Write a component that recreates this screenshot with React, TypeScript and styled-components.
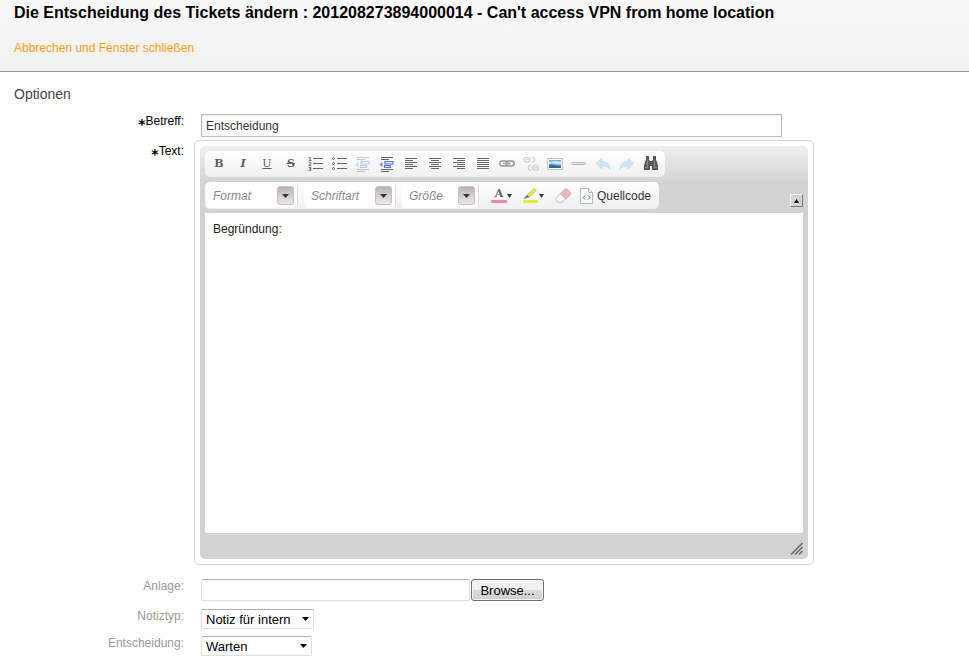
import React, { useRef, useState } from "react";
import styled, { createGlobalStyle } from "styled-components";

const GlobalStyle = createGlobalStyle`
  *, *::before, *::after { box-sizing: border-box; }
  body {
    margin: 0;
    background: #fff;
    color: #000;
    font-family: "Liberation Sans", Arial, sans-serif;
    font-size: 12px;
  }
  button, input, select, textarea { font: inherit; color: inherit; margin: 0; }
`;

const Header = styled.header`
  display: flex;
  flex-direction: column;
  align-items: flex-start;
  gap: 16px;
  padding: 3px 14px 14px;
  background: linear-gradient(#f9f9f9, #f1f1f1);
  border-bottom: 1px solid #999;
`;

const Title = styled.h1`
  margin: 0;
  font-size: 16px;
  line-height: 20px;
  font-weight: bold;
`;

const CancelLink = styled.a`
  color: #ff9b21;
  line-height: 18px;
  text-decoration: none;
  &:hover { text-decoration: underline; }
`;

const SectionTitle = styled.h2`
  margin: 0;
  padding: 14px 14px 12px;
  font-size: 14px;
  line-height: 16px;
  font-weight: normal;
  color: #444;
`;

const Form = styled.form`
  display: flex;
  flex-direction: column;
`;

const Row = styled.div<{ $gap?: number }>`
  display: grid;
  grid-template-columns: 184px minmax(0, 1fr);
  column-gap: 10px;
  align-items: start;
  margin-bottom: ${(p) => p.$gap ?? 0}px;
`;

const Label = styled.label<{ $required?: boolean; $lowered?: boolean }>`
  display: flex;
  justify-content: flex-end;
  align-items: center;
  height: 14px;
  margin-top: ${(p) => (p.$lowered ? 4 : 0)}px;
  line-height: 14px;
  color: ${(p) => (p.$required ? "#000" : "#999")};
`;

const Marker = styled.span`
  font-family: "DejaVu Sans", sans-serif;
  font-size: 14px;
  font-weight: bold;
  line-height: 14px;
  padding-top: 6px;
`;

const Field = styled.div`
  display: flex;
  gap: 1px;
  padding: 0 14px 0 7px;
`;

const SubjectInput = styled.input`
  flex: 0 1 581px;
  min-width: 0;
  height: 23px;
  padding: 0 4px;
  border: 1px solid #bbb;
  box-shadow: inset 1px 1px 2px #eee;
  background: #fff;
  color: #333;
`;

const Editor = styled.div`
  width: 100%;
  max-width: 620px;
  padding: 5px;
  border: 1px solid #d3d3d3;
  border-radius: 5px;
`;

const EditorBody = styled.div`
  display: flex;
  flex-direction: column;
  padding: 5px 5px 0;
  border-radius: 5px;
  background: #d3d3d3 linear-gradient(#efefef, #d3d3d3) no-repeat 0 0 / 100% 38px;
`;

const ToolbarArea = styled.div`
  display: flex;
  justify-content: space-between;
  align-items: flex-end;
  padding-bottom: 4px;
`;

const ToolbarRows = styled.div`
  display: flex;
  flex-direction: column;
  align-items: flex-start;
  gap: 5px;
`;

const Group = styled.div`
  display: flex;
  align-items: center;
  height: 26px;
  border-radius: 5px;
  background: linear-gradient(#fff, #f0f0f0);
`;

const IconGroup = styled(Group)`
  padding: 0 2px;
`;

const ComboGroup = styled(Group)`
  height: 27px;
  padding: 0 4px 0 1px;
`;

const ToolButton = styled.button<{ $width?: number; $faded?: boolean }>`
  display: flex;
  align-items: center;
  justify-content: center;
  width: ${(p) => p.$width ?? 24}px;
  height: 26px;
  padding: 0;
  border: 0;
  background: none;
  color: #606060;
  opacity: ${(p) => (p.$faded ? 0.35 : 1)};
  cursor: pointer;
`;

const Letter = styled.span<{ $kind: "b" | "i" | "u" | "s" }>`
  font-family: "DejaVu Serif", serif;
  font-size: 11px;
  line-height: 14px;
  font-weight: ${(p) => (p.$kind === "u" ? "normal" : "bold")};
  font-style: ${(p) => (p.$kind === "i" ? "italic" : "normal")};
  text-decoration: ${(p) =>
    p.$kind === "u" ? "underline" : p.$kind === "s" ? "line-through" : "none"};
`;

const ComboBox = styled.div<{ $width: number }>`
  display: grid;
  align-items: center;
  width: ${(p) => p.$width}px;
  height: 25px;
  margin-right: 6px;
  border-right: 1px solid #ddd;
  border-radius: 4px;
  background: #fff;
  > * { grid-area: 1 / 1; }
`;

const ComboSelect = styled.select`
  appearance: none;
  width: 100%;
  height: 24px;
  padding: 0 22px 0 7px;
  border: 0;
  background: none;
  color: #888;
  font-style: italic;
`;

const ComboArrow = styled.span`
  display: flex;
  justify-self: end;
  align-items: center;
  justify-content: center;
  width: 17px;
  height: 19px;
  margin-right: 3px;
  border: 1px solid #c6bfbf;
  border-radius: 3px;
  background: linear-gradient(#bdb3b3, #ece8e8);
  pointer-events: none;
`;

const SourceButton = styled.button`
  display: flex;
  align-items: center;
  gap: 4px;
  height: 26px;
  padding: 0 4px 0 3px;
  border: 0;
  background: none;
  color: #333;
  cursor: pointer;
`;

const CollapseButton = styled.button`
  display: flex;
  align-items: center;
  justify-content: center;
  width: 13px;
  height: 13px;
  margin-bottom: 2px;
  padding: 0;
  border: 1px solid;
  border-color: #f2f2f2 #777 #777 #f2f2f2;
  background: #d3d3d3;
`;

const TextArea = styled.textarea`
  display: block;
  width: 100%;
  height: 320px;
  padding: 8px;
  border: 0;
  outline: 0;
  resize: none;
  background: #fff;
  color: #222;
  line-height: 16px;
`;

const EditorFooter = styled.div`
  display: flex;
  justify-content: flex-end;
  align-items: flex-end;
  height: 26px;
  padding-bottom: 4px;
`;

const FilePath = styled.input`
  flex: 0 1 269px;
  min-width: 0;
  height: 22px;
  border: 1px solid #dbdfe6;
  border-top-color: #abadb3;
  border-radius: 2px;
  background: #fff;
`;

const BrowseButton = styled.button`
  height: 22px;
  width: 73px;
  padding: 0;
  border: 1px solid #707070;
  border-radius: 3px;
  background: linear-gradient(#f2f2f2 0 50%, #dddddd 50%, #cfcfcf);
  box-shadow: inset 0 0 0 1px #f6f6f6;
  font-size: 13px;
`;

const SelectBox = styled.div<{ $width: number }>`
  display: grid;
  align-items: center;
  width: ${(p) => p.$width}px;
  > * { grid-area: 1 / 1; }
  > svg { justify-self: end; margin-right: 5px; pointer-events: none; }
`;

const Select = styled.select`
  appearance: none;
  width: 100%;
  height: 20px;
  padding: 0 18px 0 4px;
  border: 1px solid #dbdfe6;
  border-top-color: #abadb3;
  border-radius: 2px;
  background: #fff;
  font-size: 13px;
`;

const HiddenFile = styled.input`
  display: none;
`;

function Icon({ w = 16, h = 16, children }: { w?: number; h?: number; children: React.ReactNode }) {
  return (
    <svg width={w} height={h} viewBox={`0 0 ${w} ${h}`} aria-hidden="true" fill="none" stroke="#666">
      {children}
    </svg>
  );
}

function Lines({ kind }: { kind: "left" | "center" | "right" | "full" }) {
  const rows = [0, 1, 2, 3, 4, 5].map((i) => {
    const len = kind === "full" || i % 2 === 0 ? 12 : 8;
    const x = kind === "right" ? 14 - len : kind === "center" ? 8 - len / 2 : 2;
    return `M${x} ${2.5 + i * 2}h${len}`;
  });
  return (
    <Icon>
      <path d={rows.join("")} />
    </Icon>
  );
}

const NumberedList = () => (
  <Icon>
    <g fill="#666" stroke="none" fontFamily="DejaVu Sans" fontSize="5.5" fontWeight="bold">
      <text x="1" y="4.5">1</text>
      <text x="1" y="9.500">2</text>
      <text x="1" y="15">3</text>
    </g>
    <path d="M6 2.500h10M6 7.500h10M6 12.500h10" />
  </Icon>
);

const BulletList = () => (
  <Icon>
    <g fill="#fff" stroke="#666">
      <circle cx="2.500" cy="2.500" r="1" />
      <circle cx="2.500" cy="7.500" r="1" />
      <circle cx="2.500" cy="12.500" r="1" />
    </g>
    <path d="M6 2.500h10M6 7.500h10M6 12.500h10" />
  </Icon>
);

const Indent = () => (
  <Icon>
    <path d="M2 1.500h12M2 3.500h8M2 13.500h12M2 15.500h8" />
    <path d="M6 5.500h8v2.500h-8zM5.500 9.500h6v2h-6z" fill="#e4eafb" stroke="#5b78cf" strokeWidth="1.2" />
    <path d="M1 8.500l2-2v4z" fill="#5b78cf" stroke="#5b78cf" strokeWidth="0.6" />
  </Icon>
);

const LinkIcon = () => (
  <Icon>
    <rect x="0.700" y="5" width="8.300" height="5" rx="2.500" stroke="#969696" strokeWidth="1.400" />
    <rect x="7" y="5" width="8.300" height="5" rx="2.500" stroke="#969696" strokeWidth="1.400" />
    <path d="M4 7.500h8" stroke="#b4b4b4" strokeWidth="2" />
  </Icon>
);

const UnlinkIcon = () => (
  <Icon>
    <g stroke="#808080" strokeWidth="1.200" fill="#f4f4f4">
      <rect x="1" y="1.500" width="6" height="4.500" rx="2.200" />
      <path d="M9 1.500h.5a2.200 2.200 0 010 4.500H9" />
      <rect x="9.500" y="9.500" width="6" height="4.500" rx="2.200" />
      <path d="M8 9.500h-.5a2.200 2.200 0 000 4.500H8" />
      <path d="M3 3.700h3M11 11.700h3" />
    </g>
  </Icon>
);

const ImageIcon = () => (
  <Icon>
    <rect x="0.500" y="2.500" width="15" height="11" fill="#fff" stroke="#b5c5ca" />
    <rect x="2" y="4" width="12" height="8" fill="#74abe0" stroke="none" />
    <path d="M2 8c4-2 7 1 12 0V6L9 5 2 6z" fill="#d4eaf8" stroke="none" />
    <path d="M2 9c4-1 7 1 12 1v2H2z" fill="#2f6a93" stroke="none" />
  </Icon>
);

const RuleIcon = () => (
  <Icon>
    <rect x="0.500" y="6.500" width="14" height="2" rx="1" fill="#eee" stroke="#b0b0b0" />
  </Icon>
);

const UndoPath = "M1 7.500l6-5v3c5 0 8 3 8 8-1.500-3-4-4-8-3.500v3z";
const UndoIcon = () => (
  <Icon>
    <path d={UndoPath} fill="#cfe6f6" stroke="#c0dff2" />
  </Icon>
);
const RedoIcon = () => (
  <Icon>
    <path d={UndoPath} transform="translate(16 0) scale(-1 1)" fill="#cfe6f6" stroke="#c0dff2" />
  </Icon>
);

const FindIcon = () => (
  <Icon>
    <path
      d="M3.500.5h2v3l1 2h3l1-2v-3h2v3l2 6v4h-5v-4h-3v4h-5v-4l2-6z"
      fill="#5c5c5c"
      stroke="#484848"
    />
    <path d="M4.500 4.500v8M11.500 4.500v8M2 11.500h3.500M10.500 11.500h3.500" stroke="#8a8a8a" />
  </Icon>
);

const TextColorIcon = () => (
  <Icon>
    <text x="8" y="9" textAnchor="middle" fill="#666" stroke="none" fontFamily="DejaVu Serif" fontSize="11" fontWeight="bold">
      A
    </text>
    <rect x="0" y="12" width="16" height="3" rx="1" fill="#fb83a5" stroke="none" />
  </Icon>
);

const HighlightIcon = () => (
  <Icon>
    <path d="M4 9l1-2.500L11 .5l2 2L6.500 9z" fill="#ece83e" stroke="#b9b53a" strokeWidth="0.800" />
    <path d="M1 10.500l3-3.500 1.800 2z" fill="#777" stroke="#777" strokeWidth="0.600" />
    <rect x="0" y="12" width="15" height="3" rx="1" fill="#e9e63c" stroke="none" />
  </Icon>
);

const EraserIcon = () => (
  <Icon>
    <path d="M1 10.500L9.500 1.500q1.500-1 3 0l2.500 2.500q1 1.500 0 3L6.500 14.500q-1.500 1-3 0L1 12.500q-.8-1 0-2z" fill="#fafafa" stroke="#bbb" />
    <path d="M5.500 6l4-4.500q1.500-1 3 0l2.500 2.500q1 1.500 0 3l-4 4z" fill="#eeb5bd" stroke="#d9a3ab" strokeWidth="0.700" />
  </Icon>
);

const SourceIcon = () => (
  <Icon w={13}>
    <path d="M.5.500h8l4 4v11H.5z" fill="#fafcfc" stroke="#a9bfbf" />
    <path d="M8.500.500v4h4" stroke="#a9bfbf" />
    <path d="M5 7.500l-2 2 2 2M8 7.500l2 2-2 2" stroke="#666" />
  </Icon>
);

const Triangle = ({ up = false, w = 7, color = "#333" }: { up?: boolean; w?: number; color?: string }) => (
  <svg width={w} height="4" viewBox="0 0 8 4" preserveAspectRatio="none" aria-hidden="true">
    <path d={up ? "M0 4h8L4 0z" : "M0 0h8L4 4z"} fill={color} />
  </svg>
);

const ResizeGrip = () => (
  <Icon w={13} h={13}>
    <path d="M1 12.500L12.500 1M5 12.500L12.500 5M9 12.500L12.500 9" strokeWidth="1.500" />
  </Icon>
);

type Tool = { name: string; icon: React.ReactNode; faded?: boolean };

const TOOLS: Tool[] = [
  { name: "Fett", icon: <Letter $kind="b">B</Letter> },
  { name: "Kursiv", icon: <Letter $kind="i">I</Letter> },
  { name: "Unterstrichen", icon: <Letter $kind="u">U</Letter> },
  { name: "Durchgestrichen", icon: <Letter $kind="s">S</Letter> },
  { name: "Nummerierte Liste", icon: <NumberedList /> },
  { name: "Liste", icon: <BulletList /> },
  { name: "Einzug verringern", icon: <Indent />, faded: true },
  { name: "Einzug erhöhen", icon: <Indent /> },
  { name: "Linksbündig", icon: <Lines kind="left" /> },
  { name: "Zentriert", icon: <Lines kind="center" /> },
  { name: "Rechtsbündig", icon: <Lines kind="right" /> },
  { name: "Blocksatz", icon: <Lines kind="full" /> },
  { name: "Link einfügen", icon: <LinkIcon /> },
  { name: "Link entfernen", icon: <UnlinkIcon />, faded: true },
  { name: "Bild", icon: <ImageIcon /> },
  { name: "Horizontale Linie", icon: <RuleIcon /> },
  { name: "Rückgängig", icon: <UndoIcon /> },
  { name: "Wiederherstellen", icon: <RedoIcon /> },
  { name: "Suchen", icon: <FindIcon /> },
];

const COMBOS = [
  { name: "Format", width: 92 },
  { name: "Schriftart", width: 92 },
  { name: "Größe", width: 77 },
];

export default function App() {
  const fileRef = useRef<HTMLInputElement>(null);
  const [fileName, setFileName] = useState("");

  return (
    <>
      <GlobalStyle />
      <Header>
        <Title>Die Entscheidung des Tickets ändern : 201208273894000014 - Can't access VPN from home location</Title>
        <CancelLink href="#">Abbrechen und Fenster schließen</CancelLink>
      </Header>
      <main>
        <SectionTitle>Optionen</SectionTitle>
        <Form onSubmit={(e) => e.preventDefault()}>
          <Row $gap={3}>
            <Label htmlFor="subject" $required>
              <Marker>*</Marker>Betreff:
            </Label>
            <Field>
              <SubjectInput id="subject" defaultValue="Entscheidung" />
            </Field>
          </Row>

          <Row $gap={14}>
            <Label htmlFor="body" $required $lowered>
              <Marker>*</Marker>Text:
            </Label>
            <Editor>
              <EditorBody>
                <ToolbarArea>
                  <ToolbarRows>
                    <IconGroup role="toolbar">
                      {TOOLS.map((t) => (
                        <ToolButton key={t.name} type="button" aria-label={t.name} $faded={t.faded}>
                          {t.icon}
                        </ToolButton>
                      ))}
                    </IconGroup>
                    <ComboGroup role="toolbar">
                      {COMBOS.map((c) => (
                        <ComboBox key={c.name} $width={c.width}>
                          <ComboSelect aria-label={c.name}>
                            <option>{c.name}</option>
                          </ComboSelect>
                          <ComboArrow>
                            <Triangle />
                          </ComboArrow>
                        </ComboBox>
                      ))}
                      <ToolButton type="button" aria-label="Textfarbe" $width={32}>
                        <TextColorIcon />
                        <Triangle w={5} />
                      </ToolButton>
                      <ToolButton type="button" aria-label="Hintergrundfarbe" $width={32}>
                        <HighlightIcon />
                        <Triangle w={5} />
                      </ToolButton>
                      <ToolButton type="button" aria-label="Formatierung entfernen" $width={28}>
                        <EraserIcon />
                      </ToolButton>
                      <SourceButton type="button">
                        <SourceIcon />
                        Quellcode
                      </SourceButton>
                    </ComboGroup>
                  </ToolbarRows>
                  <CollapseButton type="button" aria-label="Symbolleiste einklappen">
                    <Triangle up w={5} color="#000" />
                  </CollapseButton>
                </ToolbarArea>
                <TextArea id="body" spellCheck={false} defaultValue="Begründung:" />
                <EditorFooter>
                  <ResizeGrip />
                </EditorFooter>
              </EditorBody>
            </Editor>
          </Row>

          <Row $gap={8}>
            <Label htmlFor="attachment">Anlage:</Label>
            <Field>
              <FilePath id="attachment" readOnly value={fileName} />
              <BrowseButton type="button" onClick={() => fileRef.current?.click()}>
                Browse...
              </BrowseButton>
              <HiddenFile
                ref={fileRef}
                type="file"
                aria-label="Anlage"
                onChange={(e) => setFileName(e.target.files?.[0]?.name ?? "")}
              />
            </Field>
          </Row>

          <Row $gap={7}>
            <Label htmlFor="notetype">Notiztyp:</Label>
            <Field>
              <SelectBox $width={113}>
                <Select id="notetype">
                  <option>Notiz für intern</option>
                </Select>
                <Triangle color="#000" />
              </SelectBox>
            </Field>
          </Row>

          <Row>
            <Label htmlFor="decision">Entscheidung:</Label>
            <Field>
              <SelectBox $width={111}>
                <Select id="decision">
                  <option>Warten</option>
                </Select>
                <Triangle color="#000" />
              </SelectBox>
            </Field>
          </Row>
        </Form>
      </main>
    </>
  );
}
